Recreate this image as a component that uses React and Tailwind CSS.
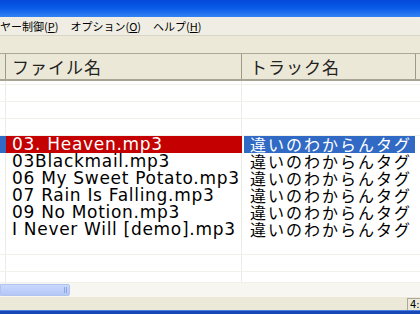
const rows = [
  { file: "03. Heaven.mp3", track: "違いのわからんタグ", selected: true },
  { file: "03Blackmail.mp3", track: "違いのわからんタグ" },
  { file: "06 My Sweet Potato.mp3", track: "違いのわからんタグ" },
  { file: "07 Rain Is Falling.mp3", track: "違いのわからんタグ" },
  { file: "09 No Motion.mp3", track: "違いのわからんタグ" },
  { file: "I Never Will [demo].mp3", track: "違いのわからんタグ" },
];

const jp = "font-['Noto_Sans_CJK_JP',sans-serif]";
const latin = "font-['DejaVu_Sans','Noto_Sans_CJK_JP',sans-serif]";

function EmptyRow({ h = "h-[17px]" }) {
  return (
    <div className={`flex ${h} border-b border-[#f1f0ea] shrink-0`}>
      <div className="w-[6px] border-r border-[#ecebe4]" />
      <div className="w-[236px] border-r border-[#ecebe4]" />
      <div className="w-[172px]" />
    </div>
  );
}

function Row({ file, track, selected }) {
  return (
    <div className="flex h-[17px] shrink-0 leading-[17px]">
      <div className={`w-[6px] ${selected ? "bg-[#316ac5]" : "border-r border-[#ecebe4]"}`} />
      <div
        className={`w-[236px] pl-[6px] whitespace-nowrap text-[17px] tracking-[0.7px] ${latin} ${
          selected ? "bg-[#c40000] text-white" : "text-black border-r border-[#ecebe4]"
        }`}
      >
        {file}
      </div>
      <div className="w-[2px]" />
      <div
        className={`w-[171px] pl-[6px] whitespace-nowrap text-[16px] tracking-[2px] ${jp} ${
          selected ? "bg-[#316ac5] text-white" : "text-black"
        }`}
      >
        {track}
      </div>
    </div>
  );
}

export default function App() {
  return (
    <div className="w-[420px] h-[314px] overflow-hidden bg-white flex flex-col">
      {/* title bar */}
      <div className="h-[17px] shrink-0 bg-gradient-to-b from-[#0448d8] via-[#0a5ce9] to-[#3382f4]" />

      {/* menu bar */}
      <div className={`h-[18px] shrink-0 bg-[#f0eee4] flex items-center gap-[12px] text-[11px] text-black ${jp}`}>
        <span>ヤー制御(<u>P</u>)</span>
        <span>オプション(<u>O</u>)</span>
        <span>ヘルプ(<u>H</u>)</span>
      </div>

      {/* toolbar */}
      <div className="h-[18px] shrink-0 bg-[#ece9d8] border-t border-[#d8d5c6]" />

      {/* header */}
      <div className={`h-[28px] shrink-0 flex bg-[#ebe8d7] border-t border-[#aca899] border-b-2 border-b-[#a7a494] text-[17px] tracking-[1px] text-[#222] ${jp}`}>
        <div className="w-[6px] border-r border-[#9d9a8b]" />
        <div className="w-[236px] pl-[6px] border-r border-[#9d9a8b] flex items-center">ファイル名</div>
        <div className="w-[174px] pl-[8px] border-r border-[#9d9a8b] flex items-center">トラック名</div>
        <div className="flex-1" />
      </div>

      {/* list */}
      <div className="flex flex-col flex-1 overflow-hidden">
        <EmptyRow h="h-[4px]" />
        <EmptyRow />
        <EmptyRow />
        <EmptyRow />
        {rows.map((r) => (
          <Row key={r.file} {...r} />
        ))}
        <EmptyRow />
        <EmptyRow />
        <EmptyRow h="h-[11px]" />
      </div>

      {/* horizontal scrollbar */}
      <div className="h-[13px] shrink-0 bg-[#f7f6f0] flex items-center">
        <div className="w-[70px] h-[12px] bg-gradient-to-b from-[#c9d8fc] to-[#b3c7f7] border border-[#b1c3ee] rounded-r-[2px] flex justify-end items-center pr-[2px]">
          <div className="w-[3px] h-[6px] border-x border-[#8fa7e0]" />
        </div>
      </div>

      {/* status bar */}
      <div className="h-[14px] shrink-0 bg-[#ece9d8] border-t border-[#f8f7f2] flex justify-end items-center">
        <div className={`w-[13px] h-[12px] border-l border-t border-[#aca899] text-[10px] leading-[11px] pl-[2px] text-black ${latin}`}>4:</div>
      </div>

      {/* taskbar edge */}
      <div className="h-[4px] shrink-0 bg-[#1648b8] border-t border-[#4d7ee0]" />
    </div>
  );
}
